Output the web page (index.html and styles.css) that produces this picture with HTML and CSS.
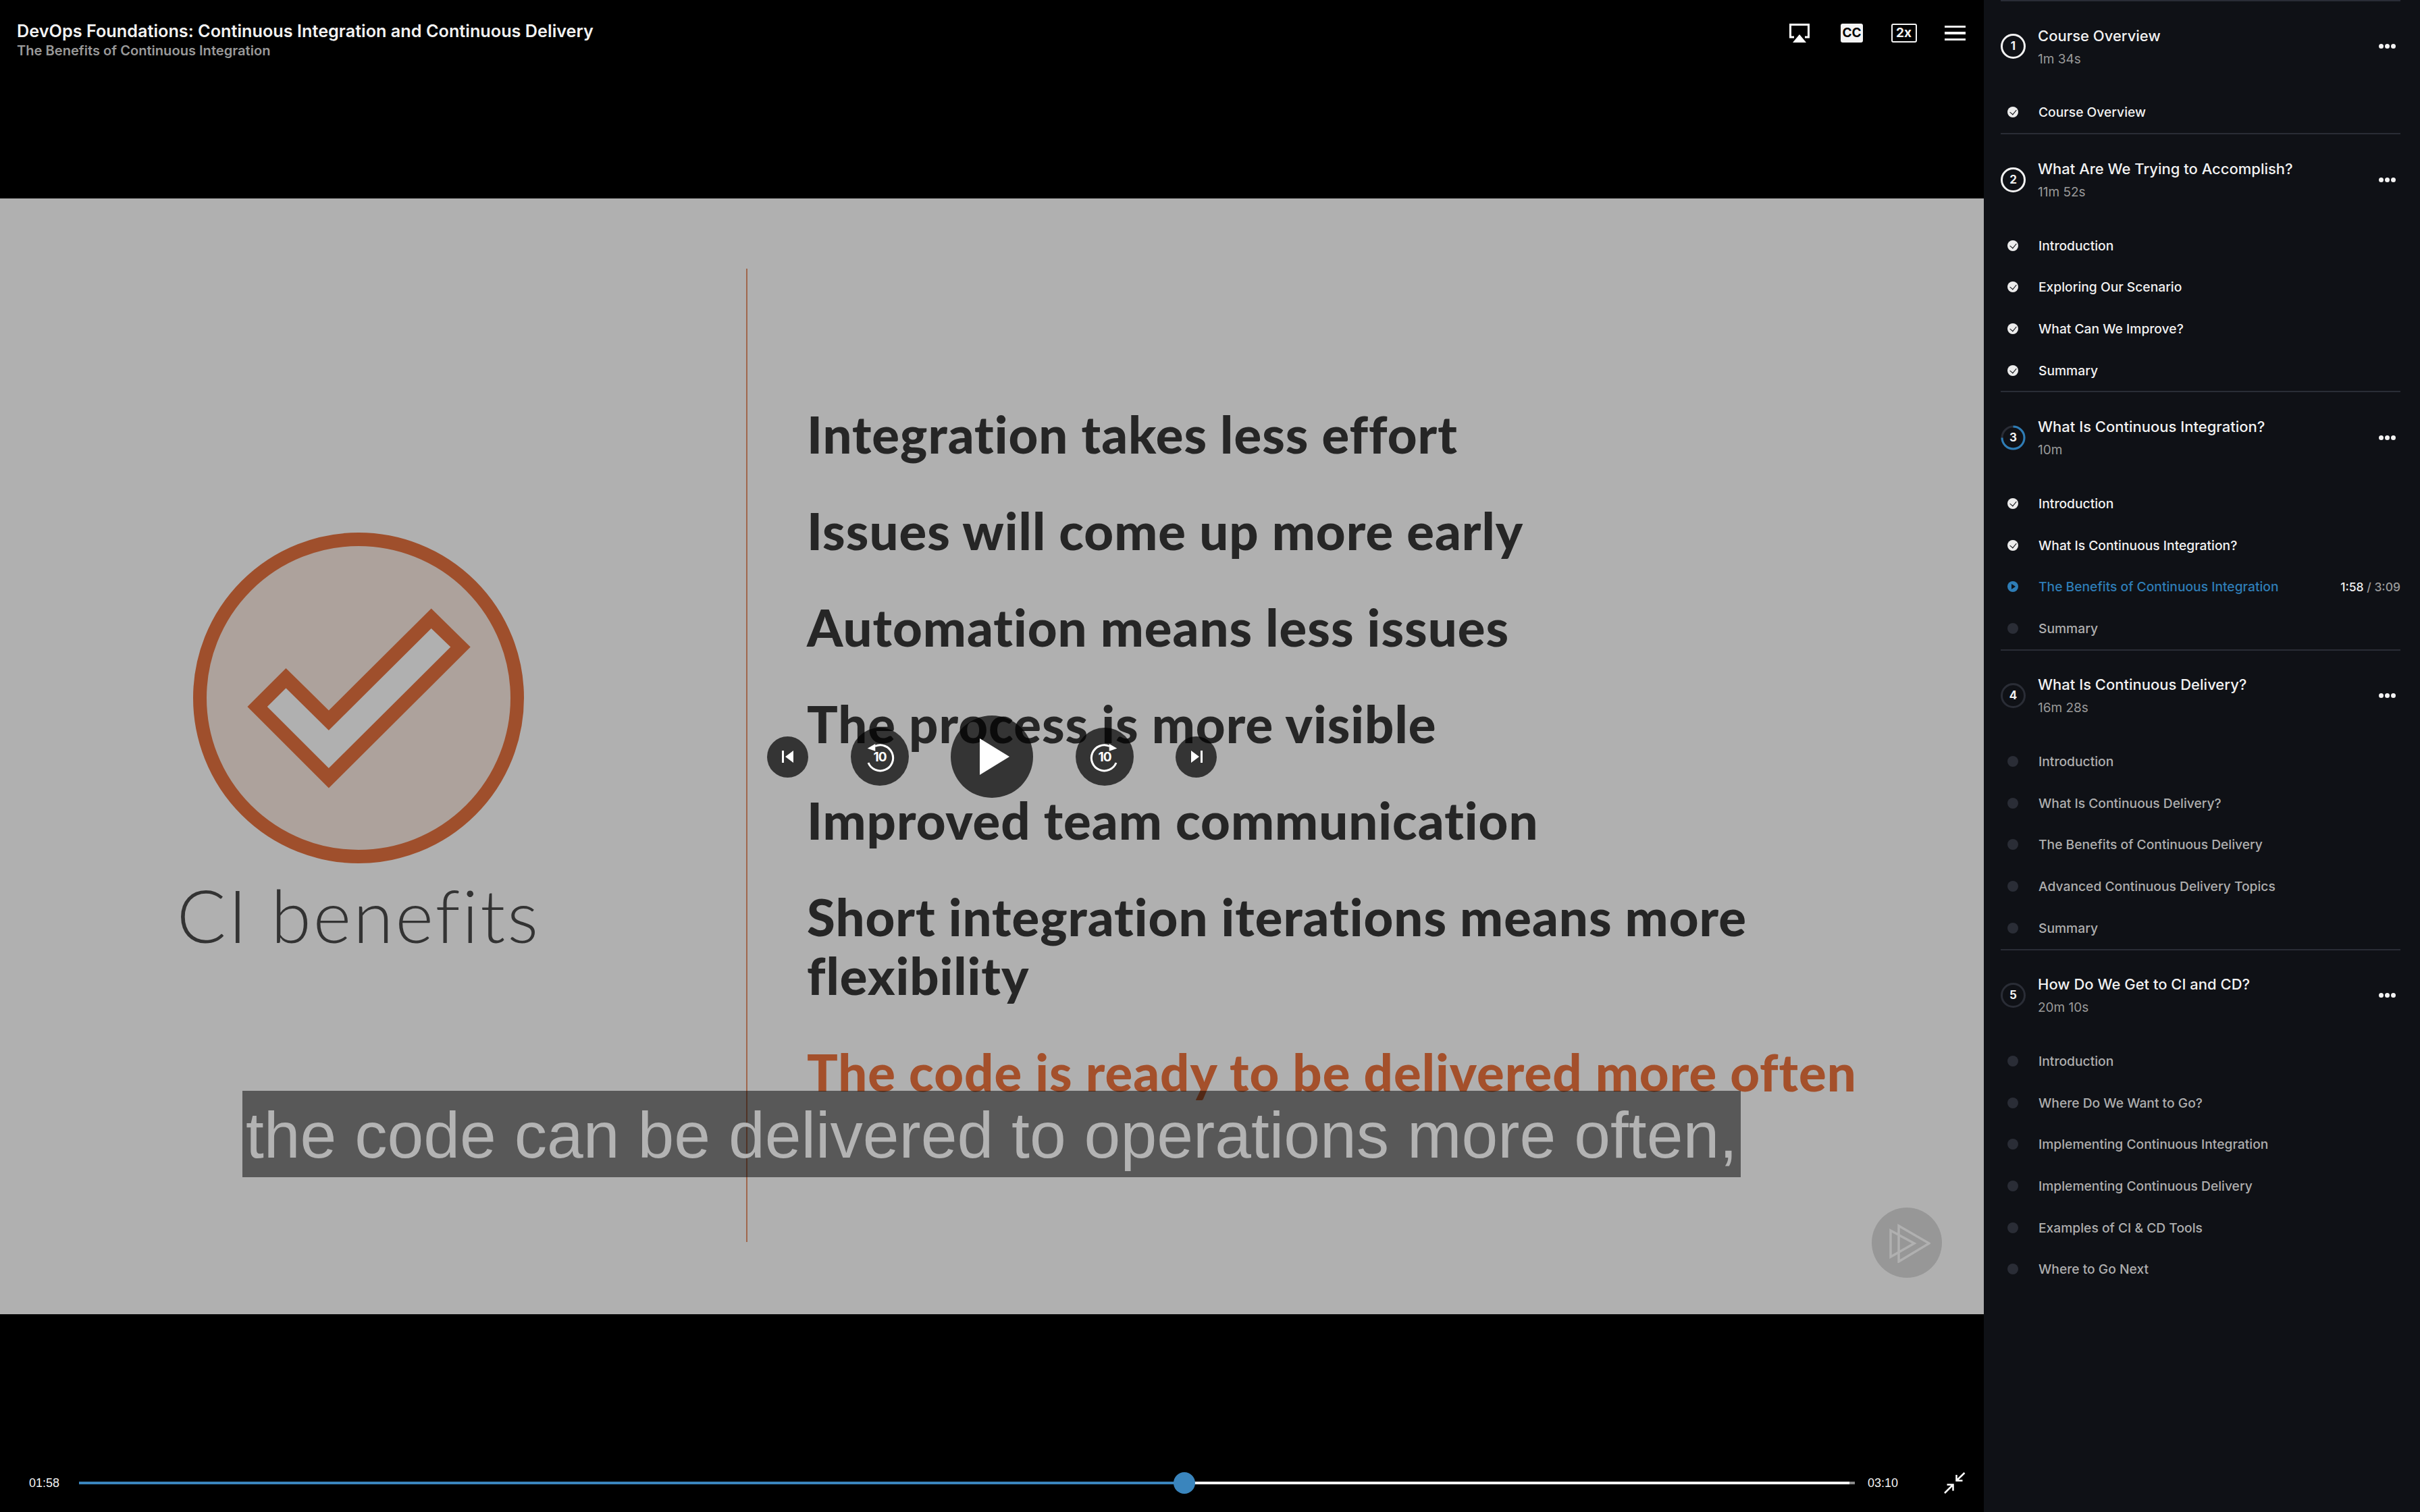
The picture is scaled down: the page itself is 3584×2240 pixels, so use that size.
FILE: index.html
```html
<!DOCTYPE html>
<html>
	<head>
		<meta charset="utf-8">
		<title>DevOps Foundations</title>
		<link rel="stylesheet" href="styles.css">
	</head>
	<body>
	  <div id="wrap">
      <div id="player">
        <div class="topbar">
          <div class="titles">
            <div class="course-title">DevOps Foundations: Continuous Integration and Continuous Delivery</div>
            <div class="clip-title">The Benefits of Continuous Integration</div>
          </div>
          <div class="top-icons">
            <svg class="ic-airplay" width="30" height="28" viewBox="0 0 30 28"><path d="M7 20H1.5V1.5h27V20H23" fill="none" stroke="#fff" stroke-width="3"/><path d="M15 16l10 12H5z" fill="#fff"/></svg>
            <div class="ic-cc">CC</div>
            <div class="ic-speed">2x</div>
            <div class="ic-menu"><i></i><i></i><i></i></div>
          </div>
        </div>

        <div class="slide">
          <div class="slide-left">
            <svg class="ci-logo" width="490" height="490" viewBox="0 0 490 490">
              <circle cx="245" cy="245" r="235" fill="#ada29c" stroke="#9f4f2c" stroke-width="20"/>
              <path d="M352.700 112.500L410.700 169.600 200.900 378.600 80.400 258 137.500 200.900 200.900 263.400z" fill="#9f4f2c"/>
              <path d="M352.700 142L381.300 169.600 200.900 349 109.800 258 137.500 230.400 200.900 292.900z" fill="#b0b0b0"/>
            </svg>
            <div class="ci-label">CI benefits</div>
          </div>
          <div class="slide-line"></div>
          <ul class="points">
            <li>Integration takes less effort</li>
            <li>Issues will come up more early</li>
            <li>Automation means less issues</li>
            <li>The process is more visible</li>
            <li>Improved team communication</li>
            <li>Short integration iterations means more flexibility</li>
            <li class="hot">The code is ready to be delivered more often</li>
          </ul>
          <div class="brand">
            <svg width="70" height="60" viewBox="0 0 70 60"><path d="M23 5l45 26-45 27zM11 12l35 19-35 20z" fill="none" stroke="#b0b0b0" stroke-width="3.5"/></svg>
          </div>
        </div>

        <div class="caption">the code can be delivered to operations more often,</div>

        <div class="controls">
          <div class="ctl ctl-sm">
            <svg width="18" height="18" viewBox="0 0 18 18"><path d="M0 0h3v18H0zM17 0v18L5 9z" fill="#fff"/></svg>
          </div>
          <div class="ctl ctl-md">
            <svg width="48" height="48" viewBox="0 0 48 48"><path d="M17 8.500A19 19 0 1 1 7 33" fill="none" stroke="#fff" stroke-width="3"/><path d="M5.700 11.700L17.300 5v10.700z" fill="#fff"/><text x="24" y="31" class="ctl-num">10</text></svg>
          </div>
          <div class="ctl ctl-lg">
            <svg width="44" height="54" viewBox="0 0 44 54"><path d="M0 0l44 27L0 54z" fill="#fff"/></svg>
          </div>
          <div class="ctl ctl-md">
            <svg width="48" height="48" viewBox="0 0 48 48"><path d="M31 8.500A19 19 0 1 0 41 33" fill="none" stroke="#fff" stroke-width="3"/><path d="M42.300 11.700L30.700 5v10.700z" fill="#fff"/><text x="24" y="31" class="ctl-num">10</text></svg>
          </div>
          <div class="ctl ctl-sm">
            <svg width="18" height="18" viewBox="0 0 18 18"><path d="M15 0h3v18h-3zM1 0v18l12-9z" fill="#fff"/></svg>
          </div>
        </div>

        <div class="bottombar">
          <span class="time">01:58</span>
          <div class="track">
            <div class="played"></div>
            <div class="thumb"></div>
            <div class="buffered"></div>
            <div class="rest"></div>
          </div>
          <span class="time">03:10</span>
          <svg class="ic-collapse" width="32" height="32" viewBox="0 0 32 32"><path d="M30.500 1L18.500 12.500M18.500 4v8.500h9M1 31l12.500-12.500M4.500 18.500h9v9" fill="none" stroke="#fff" stroke-width="2.500"/></svg>
        </div>
      </div>

      <div id="sidebar">
        <div class="module">
          <div class="mod-head">
            <div class="mod-num">1</div>
            <div class="mod-text"><div class="mod-title">Course Overview</div><div class="mod-time">1m 34s</div></div>
            <div class="mod-more"><i></i><i></i><i></i></div>
          </div>
          <div class="clip done"><span class="dot"></span>Course Overview</div>
        </div>
        <div class="module">
          <div class="mod-head">
            <div class="mod-num">2</div>
            <div class="mod-text"><div class="mod-title">What Are We Trying to Accomplish?</div><div class="mod-time">11m 52s</div></div>
            <div class="mod-more"><i></i><i></i><i></i></div>
          </div>
          <div class="clip done"><span class="dot"></span>Introduction</div>
          <div class="clip done"><span class="dot"></span>Exploring Our Scenario</div>
          <div class="clip done"><span class="dot"></span>What Can We Improve?</div>
          <div class="clip done"><span class="dot"></span>Summary</div>
        </div>
        <div class="module">
          <div class="mod-head">
            <div class="mod-num partial">
              <svg width="37" height="37" viewBox="0 0 37 37"><circle cx="18.500" cy="18.500" r="16.500" fill="none" stroke="#2a2d36" stroke-width="3"/><path d="M18.500 2A16.500 16.500 0 1 1 2 18.500" fill="none" stroke="#2e7db6" stroke-width="3"/></svg>
              3
            </div>
            <div class="mod-text"><div class="mod-title">What Is Continuous Integration?</div><div class="mod-time">10m</div></div>
            <div class="mod-more"><i></i><i></i><i></i></div>
          </div>
          <div class="clip done"><span class="dot"></span>Introduction</div>
          <div class="clip done"><span class="dot"></span>What Is Continuous Integration?</div>
          <div class="clip current"><span class="dot"></span>The Benefits of Continuous Integration<span class="clip-time"><b>1:58</b> / 3:09</span></div>
          <div class="clip"><span class="dot"></span>Summary</div>
        </div>
        <div class="module">
          <div class="mod-head">
            <div class="mod-num todo">4</div>
            <div class="mod-text"><div class="mod-title">What Is Continuous Delivery?</div><div class="mod-time">16m 28s</div></div>
            <div class="mod-more"><i></i><i></i><i></i></div>
          </div>
          <div class="clip"><span class="dot"></span>Introduction</div>
          <div class="clip"><span class="dot"></span>What Is Continuous Delivery?</div>
          <div class="clip"><span class="dot"></span>The Benefits of Continuous Delivery</div>
          <div class="clip"><span class="dot"></span>Advanced Continuous Delivery Topics</div>
          <div class="clip"><span class="dot"></span>Summary</div>
        </div>
        <div class="module">
          <div class="mod-head">
            <div class="mod-num todo">5</div>
            <div class="mod-text"><div class="mod-title">How Do We Get to CI and CD?</div><div class="mod-time">20m 10s</div></div>
            <div class="mod-more"><i></i><i></i><i></i></div>
          </div>
          <div class="clip"><span class="dot"></span>Introduction</div>
          <div class="clip"><span class="dot"></span>Where Do We Want to Go?</div>
          <div class="clip"><span class="dot"></span>Implementing Continuous Integration</div>
          <div class="clip"><span class="dot"></span>Implementing Continuous Delivery</div>
          <div class="clip"><span class="dot"></span>Examples of CI &amp; CD Tools</div>
          <div class="clip"><span class="dot"></span>Where to Go Next</div>
        </div>
      </div>
	  </div>
	</body>
</html>
```

FILE: styles.css
```css
* { box-sizing: border-box; }
html, body { margin: 0; padding: 0; background: #000; }
body { font-family: "Inter", "Liberation Sans", sans-serif; }

#wrap {
  width: 3584px; height: 2240px;
  display: flex;
  overflow: hidden;
}

/* player */
#player {
  width: 2938px; height: 2240px;
  position: relative;
  display: flex;
  flex-direction: column;
  background: #000;
}
.topbar {
  height: 294px;
  display: flex;
  justify-content: space-between;
  align-items: flex-start;
  padding: 31px 27px 0 25px;
}
.course-title { color: #f2f2f2; font-size: 25.25px; font-weight: 600; line-height: 30px; }
.clip-title { color: #999; font-size: 20.1px; font-weight: 600; line-height: 28px; }
.top-icons { display: flex; align-items: center; gap: 41.5px; padding-top: 4px; }
.ic-cc, .ic-speed {
  width: 33px; height: 28px;
  border-radius: 3px;
  font-size: 19px; font-weight: 700;
  text-align: center; line-height: 28px;
}
.ic-cc { background: #f4f4f4; color: #000; margin-left: 5px; }
.ic-speed { width: 38px; border: 2.5px solid #f4f4f4; color: #f4f4f4; line-height: 23px; }
.ic-menu { width: 31px; display: flex; flex-direction: column; gap: 6px; }
.ic-menu i { display: block; height: 3.5px; background: #f4f4f4; }

/* slide */
.slide {
  height: 1653px;
  background: #b0b0b0;
  position: relative;
  display: flex;
  align-items: flex-start;
}
.slide-left {
  width: 1105px;
  padding: 495px 43px 0 0;
  display: flex;
  flex-direction: column;
  align-items: center;
}
.ci-logo { display: block; }
.ci-label {
  font-family: "Lato", sans-serif;
  font-weight: 300;
  font-size: 108px;
  line-height: 130px;
  color: #333;
  letter-spacing: 3px;
  white-space: nowrap;
  margin-top: 11px;
  font-variant-ligatures: none;
}
.slide-line { width: 2px; height: 1442px; margin-top: 104px; background: #a0664c; }
.points {
  list-style: none;
  margin: 0;
  padding: 305px 0 0 88px;
  width: 1600px;
  font-family: "Lato", sans-serif;
  font-weight: 900;
  font-size: 76px;
  line-height: 87px;
  letter-spacing: 1px;
  font-variant-ligatures: none;
  color: #262626;
}
.points li { margin-bottom: 56px; }
.points .hot { color: #a4502b; white-space: nowrap; }
.brand {
  position: absolute;
  left: 2772px; top: 1495px;
  width: 104px; height: 104px;
  border-radius: 50%;
  background: #979797;
  display: flex; align-items: center; justify-content: center;
}

.caption {
  position: absolute;
  left: 359px; top: 1616px;
  width: 2219px; height: 128px;
  background: rgba(0,0,0,0.5);
  color: #b3b3b3;
  font-family: "Liberation Sans", Arial, sans-serif;
  font-size: 96.7px;
  line-height: 130px;
  text-align: center;
  white-space: nowrap;
}

.controls {
  position: absolute;
  left: 0; right: 0; top: 1060px;
  height: 122px;
  display: flex;
  justify-content: center;
  align-items: center;
  gap: 62.5px;
}
.ctl {
  border-radius: 50%;
  background: rgba(0,0,0,0.7);
  display: flex; align-items: center; justify-content: center;
}
.ctl-sm { width: 61px; height: 61px; }
.ctl-md { width: 86px; height: 86px; }
.ctl-lg { width: 122px; height: 122px; padding-left: 8px; }
.ctl-num { fill: #fff; font-size: 19px; font-weight: 700; text-anchor: middle; letter-spacing: -1px; }

.bottombar {
  position: absolute;
  left: 0; right: 0; bottom: 0;
  height: 86px;
  display: flex;
  align-items: center;
  padding: 0 27px 0 43px;
}
.time {
  color: #f2f2f2;
  font-family: "Liberation Sans", Arial, sans-serif;
  font-size: 18px;
  width: 45px;
}
.track { width: 2630px; margin: 0 19px 0 29px; height: 4px; display: flex; align-items: center; position: relative; }
.played { width: 1636px; height: 4px; background: #3a85bd; }
.buffered { flex: 1; height: 4px; background: #fff; }
.rest { width: 8px; height: 4px; background: #8a8a8a; }
.thumb {
  position: absolute;
  left: 1621px; top: -14px;
  width: 32px; height: 32px;
  border-radius: 50%;
  background: #3a85bd;
}
.ic-collapse { margin-left: 68px; }

/* sidebar */
#sidebar {
  width: 646px; height: 2240px;
  background: #0f1116;
  padding: 0 29px 0 25px;
}
.module { border-top: 2px solid #2a2d36; }
.mod-head {
  height: 133.6px;
  display: flex;
  align-items: center;
}
.mod-num {
  width: 37px; height: 37px;
  border: 3px solid #f2f2f2;
  border-radius: 50%;
  color: #f2f2f2;
  font-size: 17px; font-weight: 700;
  text-align: center; line-height: 31px;
  position: relative;
  flex: none;
}
.mod-num.todo { border-color: #2a2d36; }
.mod-num.partial { border: 0; line-height: 37px; }
.mod-num.partial svg { position: absolute; left: 0; top: 0; }
.mod-text { flex: 1; padding-left: 18px; }
.mod-title { color: #f2f2f2; font-size: 22px; font-weight: 500; line-height: 30px; }
.mod-time { color: #9a9a9a; font-size: 19px; line-height: 24px; margin-top: 8px; }
.mod-more { display: flex; gap: 2px; padding-right: 7px; }
.mod-more i { width: 7px; height: 7px; border-radius: 50%; background: #f2f2f2; }

.clip {
  height: 61.67px;
  display: flex;
  align-items: center;
  color: #aeaeae;
  font-size: 19.25px;
  font-weight: 450;
  position: relative;
}
.dot {
  width: 16px; height: 16px;
  border-radius: 50%;
  background: #2a2d36;
  margin: 0 30px 0 10px;
  flex: none;
  position: relative;
}
.clip.done { color: #f2f2f2; }
.clip.done .dot { background: #ececec; }
.clip.done .dot:after {
  content: "";
  position: absolute;
  left: 4px; top: 4px;
  width: 8px; height: 5px;
  border-left: 1.5px solid #0f1116;
  border-bottom: 1.5px solid #0f1116;
  transform: rotate(-50deg);
}
.clip.current { color: #2e7db6; }
.clip.current .dot { background: #2e7db6; }
.clip.current .dot:after {
  content: "";
  position: absolute;
  left: 6px; top: 4px;
  border-left: 6px solid #0f1116;
  border-top: 4px solid transparent;
  border-bottom: 4px solid transparent;
}
.clip-time { margin-left: auto; color: #9a9a9a; font-size: 17.5px; }
.clip-time b { color: #f2f2f2; font-weight: 500; }
```
